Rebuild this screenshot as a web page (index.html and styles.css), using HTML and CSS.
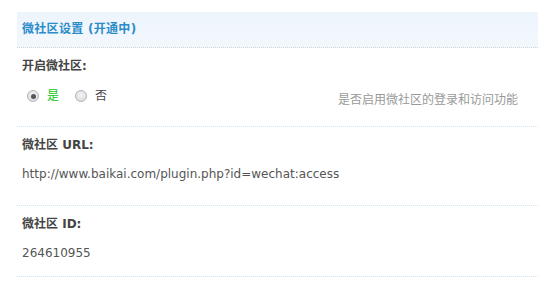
FILE: index.html
```html
<!DOCTYPE html>
<html lang="zh-CN">
<head>
<meta charset="utf-8">
<title>微社区设置</title>
<link rel="stylesheet" href="styles.css">
</head>
<body>
<div class="panel">
  <div class="panel-head">微社区设置 (开通中)</div>
  <div class="row row-open">
    <div class="label">开启微社区:</div>
    <div class="options">
      <div class="radios">
        <label class="radio"><span class="dot checked"></span><span class="yes">是</span></label>
        <label class="radio"><span class="dot"></span><span class="no">否</span></label>
      </div>
      <div class="help">是否启用微社区的登录和访问功能</div>
    </div>
  </div>
  <div class="row row-url">
    <div class="label">微社区 URL:</div>
    <div class="value">http://www.baikai.com/plugin.php?id=wechat:access</div>
  </div>
  <div class="row row-id">
    <div class="label">微社区 ID:</div>
    <div class="value">264610955</div>
  </div>
</div>
</body>
</html>
```

FILE: styles.css
```css
html, body {
  margin: 0;
  padding: 0;
  background: #ffffff;
}

body {
  font-family: "DejaVu Sans", "Noto Sans CJK SC", sans-serif;
  font-size: 12px;
  color: #333;
}

.panel {
  margin: 12px 0 0 17px;
}

.panel-head {
  height: 35px;
  line-height: 35px;
  padding-left: 5px;
  background: linear-gradient(#edf4fc, #f3f8fd);
  border-bottom: 1px dotted #d2d6db;
  color: #2a8cca;
  font-weight: bold;
  font-size: 12px;
  letter-spacing: 0.3px;
}

.row {
  padding: 9px 0 0 5px;
  border-bottom: 1px dotted #cfe4f3;
}

.label {
  height: 18px;
  line-height: 18px;
  font-weight: bold;
  color: #444;
}

.value {
  margin-top: 11px;
  height: 18px;
  line-height: 18px;
  color: #555;
}

.row-open {
  padding-bottom: 21px;
}

.row-url {
  padding-bottom: 22px;
}

.row-id {
  padding-bottom: 14px;
}

.options {
  display: flex;
  margin-top: 12px;
  height: 18px;
}

.radios {
  display: flex;
  width: 311px;
  padding-left: 5px;
  gap: 16px;
}

.radio {
  display: flex;
  align-items: center;
  line-height: 18px;
}

.dot {
  box-sizing: border-box;
  width: 12px;
  height: 12px;
  border-radius: 50%;
  border: 1px solid #b4b4b4;
  background: radial-gradient(circle at 50% 40%, #f4f4f4, #d8d8d8);
  margin-right: 8px;
  position: relative;
}

.dot.checked::after {
  content: "";
  position: absolute;
  left: 2.5px;
  top: 2.5px;
  width: 5px;
  height: 5px;
  border-radius: 50%;
  background: #555;
}

.yes {
  color: #11c411;
}

.no {
  color: #444;
}

.help {
  margin-top: 4px;
  line-height: 18px;
  color: #999;
}
```
